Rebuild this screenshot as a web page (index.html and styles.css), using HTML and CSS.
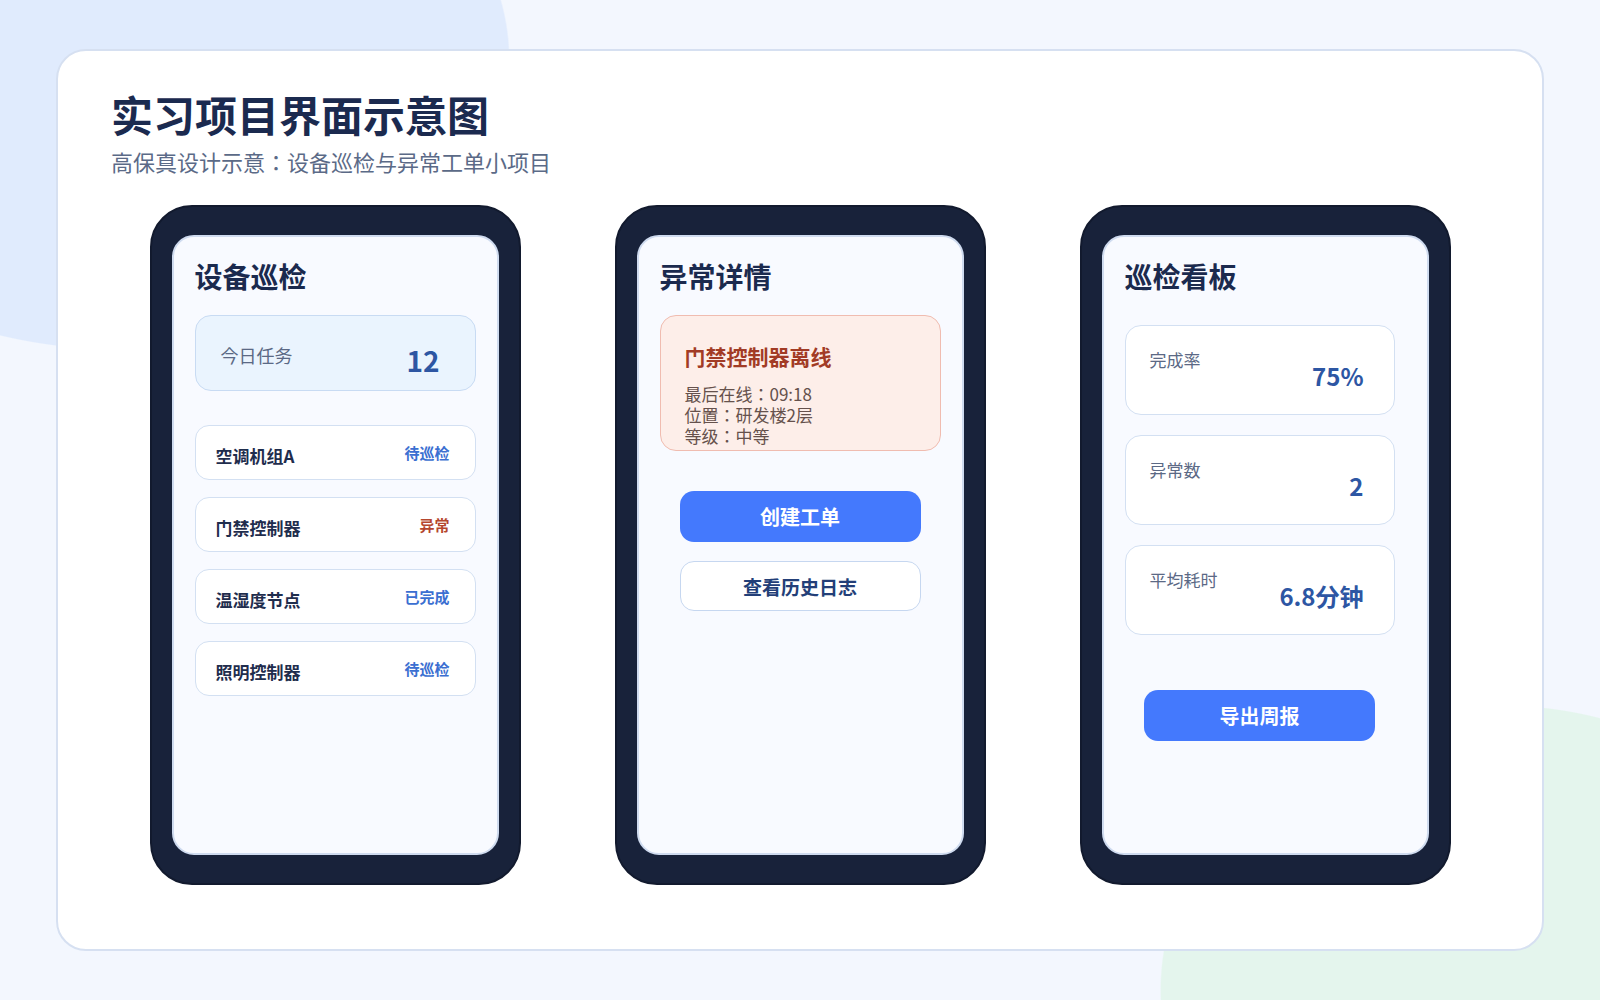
FILE: index.html
```html
<!DOCTYPE html>
<html lang="ja">
<head>
    <meta charset="UTF-8">
    <meta name="viewport" content="width=device-width, initial-scale=1.0">
    <title>实习项目界面示意图</title>
    <link rel="stylesheet" href="styles.css">
</head>
<body>
    <!-- 白色大卡片 -->
    <main class="board">
        <header class="board-head">
            <h1>实习项目界面示意图</h1>
            <p>高保真设计示意：设备巡检与异常工单小项目</p>
        </header>

        <section class="phones">
            <!-- 手机1：设备巡检 -->
            <div class="phone">
                <div class="screen">
                    <h2>设备巡检</h2>
                    <div class="today">
                        <span class="today-label">今日任务</span>
                        <span class="today-num">12</span>
                    </div>
                    <ul class="task-list">
                        <li class="task"><span class="task-name">空调机组A</span><span class="tag">待巡检</span></li>
                        <li class="task"><span class="task-name">门禁控制器</span><span class="tag tag-warn">异常</span></li>
                        <li class="task"><span class="task-name">温湿度节点</span><span class="tag">已完成</span></li>
                        <li class="task"><span class="task-name">照明控制器</span><span class="tag">待巡检</span></li>
                    </ul>
                </div>
            </div>

            <!-- 手机2：异常详情 -->
            <div class="phone">
                <div class="screen">
                    <h2>异常详情</h2>
                    <div class="alert">
                        <h3>门禁控制器离线</h3>
                        <p>最后在线：09:18</p>
                        <p>位置：研发楼2层</p>
                        <p>等级：中等</p>
                    </div>
                    <a class="btn btn-primary" href="javascript:;">创建工单</a>
                    <a class="btn btn-ghost" href="javascript:;">查看历史日志</a>
                </div>
            </div>

            <!-- 手机3：巡检看板 -->
            <div class="phone">
                <div class="screen">
                    <h2>巡检看板</h2>
                    <div class="stats">
                        <div class="stat"><span class="stat-label">完成率</span><span class="stat-num">75%</span></div>
                        <div class="stat"><span class="stat-label">异常数</span><span class="stat-num">2</span></div>
                        <div class="stat"><span class="stat-label">平均耗时</span><span class="stat-num">6.8分钟</span></div>
                        <a class="btn btn-primary btn-export" href="javascript:;">导出周报</a>
                    </div>
                </div>
            </div>
        </section>
    </main>
</body>
</html>
```

FILE: styles.css
```css
*{
    margin: 0;
    padding: 0;
    box-sizing: border-box;
}
body{
    width: 1600px;
    height: 1000px;
    overflow: hidden;
    font-family: "Noto Sans CJK JP", "Noto Sans CJK SC", "Noto Sans", sans-serif;
    color: #1b2a4e;
    /* 左上蓝色、右下绿色的背景色块 */
    background:
        radial-gradient(ellipse 390px 290px at 120px 60px, #e0ebfd 99.6%, transparent 100%),
        radial-gradient(ellipse 340px 285px at 1500px 990px, #e4f5ed 99.6%, transparent 100%),
        #f3f7fe;
}
.board{
    width: 1488px;
    height: 902px;
    margin: 49px 0 0 56px;
    padding-top: 38px;
    background-color: #fff;
    border: 2px solid #d6e0f1;
    border-radius: 30px;
}
.board-head{
    padding-left: 53px;
}
.board-head h1{
    font-size: 42px;
    line-height: 50px;
    font-weight: 700;
    color: #1b2a4f;
}
.board-head p{
    margin-top: 7px;
    font-size: 22px;
    line-height: 30px;
    color: #5b6a87;
}

/* 三台手机水平居中排列 */
.phones{
    display: flex;
    justify-content: center;
    gap: 94px;
    margin-top: 29px;
}
.phone{
    width: 371px;
    height: 680px;
    padding: 28px 20px;
    background-color: #18223a;
    border: 2px solid #121a2e;
    border-radius: 42px;
}
.screen{
    height: 100%;
    padding: 21px 21px 0;
    background-color: #f8faff;
    border: 2px solid #cfdbef;
    border-radius: 22px;
}
.screen h2{
    font-size: 28px;
    line-height: 36px;
    font-weight: 700;
    color: #1b2a4e;
}

/* 今日任务 */
.today{
    display: flex;
    justify-content: space-between;
    align-items: flex-start;
    height: 76px;
    margin-top: 21px;
    padding: 27px 35px 0 25px;
    background-color: #eaf4fe;
    border: 1px solid #c8dbf3;
    border-radius: 16px;
}
.today-label{
    font-size: 18px;
    line-height: 24px;
    color: #5b6985;
}
.today-num{
    font-size: 28px;
    line-height: 34px;
    font-weight: 700;
    color: #2d56a3;
}
.task-list{
    list-style: none;
    margin-top: 34px;
}
.task{
    display: flex;
    justify-content: space-between;
    align-items: center;
    height: 55px;
    margin-bottom: 17px;
    padding: 0 25px 0 20px;
    background-color: #fff;
    border: 1px solid #d3e0f2;
    border-radius: 14px;
}
.task-name{
    padding-top: 6px;
    font-size: 17px;
    font-weight: 700;
    color: #1f2d4d;
}
.tag{
    font-size: 15px;
    font-weight: 700;
    color: #3b6fd1;
}
.tag-warn{
    color: #b5472e;
}

/* 异常详情 */
.alert{
    height: 136px;
    margin-top: 21px;
    padding: 26px 24px 0;
    background-color: #fdeee9;
    border: 1px solid #f0bcb0;
    border-radius: 16px;
}
.alert h3{
    font-size: 21px;
    line-height: 28px;
    font-weight: 700;
    color: #a23b25;
    margin-bottom: 13px;
}
.alert p{
    font-size: 17px;
    line-height: 21px;
    color: #65514c;
}
.btn{
    display: flex;
    justify-content: center;
    align-items: center;
    width: 241px;
    height: 51px;
    margin: 40px auto 0;
    font-size: 20px;
    font-weight: 700;
    text-decoration: none;
    border-radius: 14px;
}
.btn-primary{
    background-color: #4479fd;
    color: #fff;
}
.btn-ghost{
    height: 50px;
    margin-top: 19px;
    font-size: 19px;
    background-color: #fff;
    color: #233f78;
    border: 1px solid #c6d7f0;
}

/* 巡检看板 */
.stats{
    width: 270px;
    margin-top: 31px;
}
.stat{
    display: flex;
    justify-content: space-between;
    align-items: flex-start;
    height: 90px;
    margin-bottom: 20px;
    padding: 23px 30px 0 24px;
    background-color: #fff;
    border: 1px solid #d3e0f2;
    border-radius: 16px;
}
.stat-label{
    font-size: 17px;
    line-height: 22px;
    color: #5b6985;
}
.stat-num{
    margin-top: 11px;
    font-size: 24px;
    line-height: 32px;
    font-weight: 700;
    color: #2d56a3;
}
.btn-export{
    width: 231px;
    margin-top: 55px;
}
```
